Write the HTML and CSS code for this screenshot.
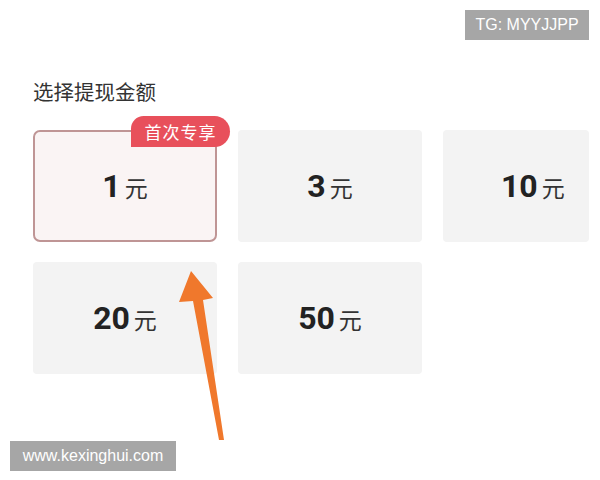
FILE: index.html
```html
<!DOCTYPE html>
<html lang="zh">
<head>
<meta charset="utf-8">
<link rel="stylesheet" href="styles.css">
</head>
<body>
<div class="page">
  <h2 class="title">选择提现金额</h2>
  <div class="grid">
    <div class="card selected">
      <span class="tag">首次专享</span>
      <span class="num">1</span><span class="unit">元</span>
    </div>
    <div class="card"><span class="num">3</span><span class="unit">元</span></div>
    <div class="card clipped"><span class="num">10</span><span class="unit">元</span></div>
    <div class="card"><span class="num">20</span><span class="unit">元</span></div>
    <div class="card"><span class="num">50</span><span class="unit">元</span></div>
  </div>
</div>
<svg class="arrow" width="600" height="480" viewBox="0 0 600 480">
  <polygon points="191,271 213,298 203,300 224,440 219,440 193,301 179,302" fill="#f0782c"/>
</svg>
<div class="mark mark-tg">TG: MYYJJPP</div>
<div class="mark mark-site">www.kexinghui.com</div>
</body>
</html>
```
FILE: styles.css
```css
html, body {
  margin: 0;
  padding: 0;
  background: #ffffff;
}
body {
  width: 600px;
  height: 480px;
  position: relative;
  overflow: hidden;
  font-family: "Noto Sans CJK SC", "Noto Sans", sans-serif;
}
.page {
  padding: 77px 0 0 33px;
}
.title {
  margin: 0;
  font-size: 20.5px;
  line-height: 28px;
  font-weight: 400;
  color: #333333;
}
.grid {
  margin-top: 25px;
  display: grid;
  grid-template-columns: 184px 184px 146px;
  grid-auto-rows: 112px;
  column-gap: 21px;
  row-gap: 20px;
}
.card {
  position: relative;
  display: flex;
  align-items: baseline;
  justify-content: center;
  padding-top: 40px;
  box-sizing: border-box;
  background: #f3f3f3;
  border-radius: 4px;
  gap: 4px;
}
.card.clipped {
  justify-content: flex-start;
  padding-left: 58px;
}
.card.selected {
  background: #faf4f4;
  border: 2px solid #bf9595;
  border-radius: 7px;
  padding-top: 38px;
}
.num {
  font-family: Roboto, "Liberation Sans", sans-serif;
  font-weight: 700;
  font-size: 32px;
  line-height: 32px;
  color: #222222;
}
.unit {
  font-size: 23px;
  line-height: 28px;
  color: #333333;
}
.tag {
  position: absolute;
  left: 96px;
  top: -16px;
  width: 99px;
  height: 31px;
  box-sizing: border-box;
  background: #e8505b;
  color: #ffffff;
  font-size: 17px;
  line-height: 31px;
  text-align: center;
  letter-spacing: 1px;
  border-radius: 13px 16px 16px 0;
}
.arrow {
  position: absolute;
  left: 0;
  top: 0;
}
.mark {
  position: absolute;
  background: #a6a6a6;
  color: #ffffff;
  font-family: "Liberation Sans", Arial, sans-serif;
  font-size: 16px;
  height: 30px;
  line-height: 30px;
  text-align: center;
}
.mark-tg {
  left: 465px;
  top: 10px;
  width: 124px;
}
.mark-site {
  left: 10px;
  top: 441px;
  width: 166px;
}
```
